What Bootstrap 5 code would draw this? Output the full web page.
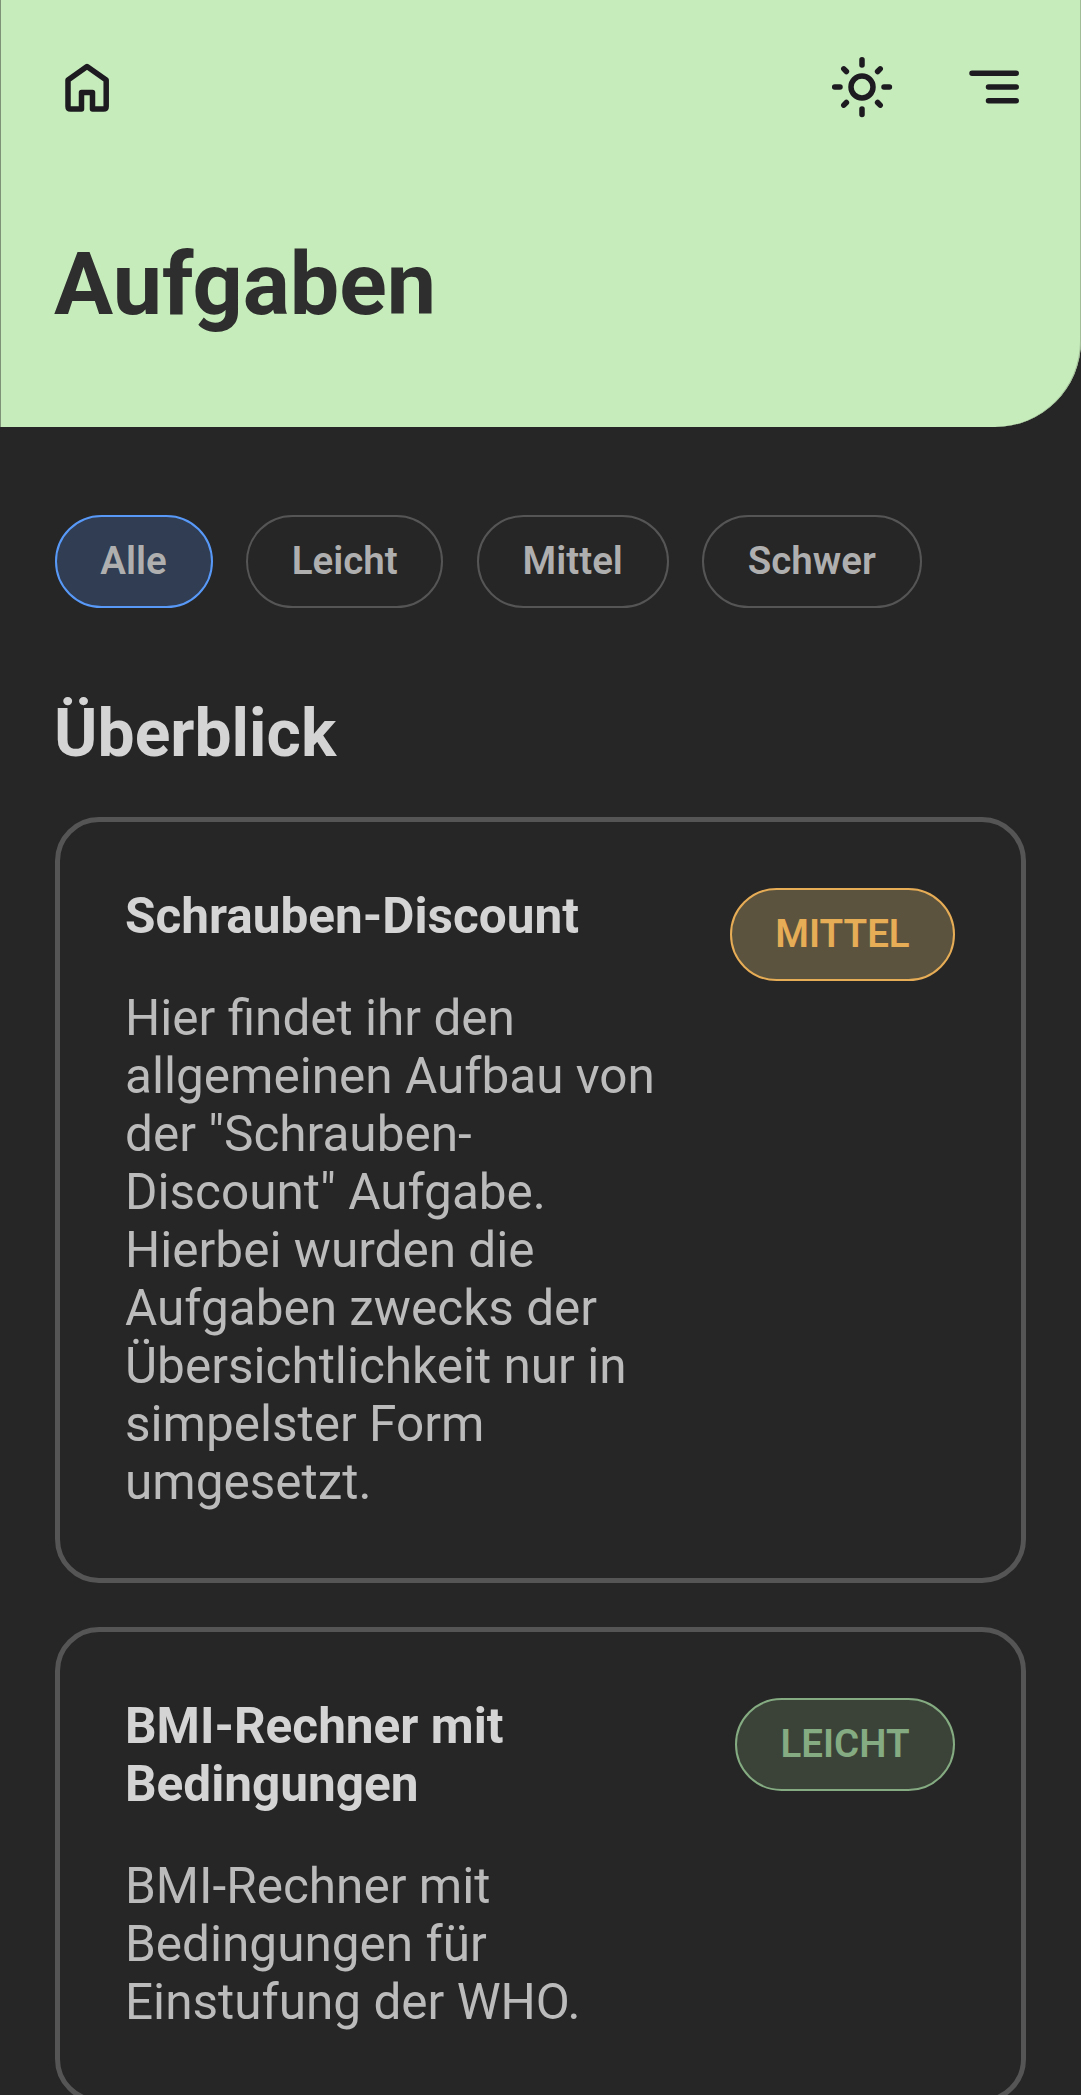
<!DOCTYPE html>
<html lang="de">
<head>
<meta charset="utf-8">
<meta name="viewport" content="width=device-width, initial-scale=1">
<title>Aufgaben</title>
<link href="https://cdn.jsdelivr.net/npm/bootstrap@5.3.0/dist/css/bootstrap.min.css" rel="stylesheet">
<style>
  body { background: #262626; color: #bbb; font-family: Roboto, "Liberation Sans", sans-serif; font-size: 49.5px; line-height: 58px; height: 2095px; overflow: hidden; }
  .hero { height: 427px; padding: 54px 54px 0 53px; background: #c6ecbb; border-left: 1px solid #7e9278; border-bottom-right-radius: 86px; box-shadow: inset -1px 0 #a1bd98; }
  .hero svg { display: block; width: 66px; height: 66px; fill: none; stroke: #1d1b20; stroke-width: 5.5; stroke-linecap: round; stroke-linejoin: round; }
  .hero .tools { gap: 66px; }
  .hero nav { margin-left: -.5px; }
  .hero h1 { margin-top: 112px; font-size: 88px; line-height: 103px; color: #2e2e2e; }
  main { padding: 88px 54.6px 0 54px; }
  .pill { padding: 21px 43.75px 23px; border: 2px solid #555; border-radius: 46.5px; font-size: 38.5px; line-height: 45px; font-weight: 600; color: #afafaf; background: none; white-space: nowrap; }
  .pill.active { border-color: #5899f8; background: #303d52; }
  .pill.medium { border-color: #e6ac56; background: #5b533d; color: #e6ac56; }
  .pill.easy { border-color: #84ab81; background: #3b4339; color: #84ab81; }
  .filters { gap: 33.4px; margin-left: .6px; }
  h2.section { margin: 87px 0 45px; font-size: 66px; line-height: 77px; color: #d4d4d4; }
  .task { border: 5px solid #555; border-radius: 44px; background: none; padding: 66px 66px 66px 65.4px; color: #bbb; gap: 66px; margin: 0 0 44px .6px; }
  .task h3 { margin: -1px 0 44px; font-size: 49.5px; line-height: 58px; color: #d4d4d4; }
  .task p { padding-bottom: 1px; }
</style>
</head>
<body>
<header class="hero">
  <nav class="d-flex justify-content-between">
    <a href="#" aria-label="Startseite"><svg viewBox="54 54 66 66"><path d="M87 66.600 68 80V106.500Q68 109 70.500 109H81.500V92.500H92.500V109H103.500Q106.200 109 106.200 106.500V80Z"/></svg></a>
    <div class="d-flex tools">
      <a href="#" aria-label="Helles Design"><svg viewBox="829 54 66 66"><circle cx="862" cy="87" r="11"/><path d="M862 59.700V65M862 109V114.400M834.700 87H840M884 87H889.400M843.800 68.800 846.400 71.500M880.200 68.800 877.600 71.500M843.800 105.200 846.400 102.500M880.200 105.200 877.600 102.500"/></svg></a>
      <a href="#" aria-label="Menü"><svg viewBox="961 54 66 66"><path d="M972 73.200H1016.200M988.500 87H1016.200M988.500 100.700H1016.200"/></svg></a>
    </div>
  </nav>
  <h1 class="fw-bold mb-0">Aufgaben</h1>
</header>
<main>
  <div class="d-flex filters">
    <button class="pill active">Alle</button>
    <button class="pill">Leicht</button>
    <button class="pill">Mittel</button>
    <button class="pill">Schwer</button>
  </div>
  <h2 class="section fw-bold">Überblick</h2>
  <article class="task d-flex justify-content-between align-items-start">
    <div>
      <h3 class="fw-bold">Schrauben-Discount</h3>
      <p class="mb-0">Hier findet ihr den allgemeinen Aufbau von der "Schrauben-Discount" Aufgabe. Hierbei wurden die Aufgaben zwecks der Übersichtlichkeit nur in simpelster Form umgesetzt.</p>
    </div>
    <span class="pill medium">MITTEL</span>
  </article>
  <article class="task d-flex justify-content-between align-items-start">
    <div>
      <h3 class="fw-bold">BMI-Rechner mit Bedingungen</h3>
      <p class="mb-0">BMI-Rechner mit Bedingungen für Einstufung der WHO.</p>
    </div>
    <span class="pill easy">LEICHT</span>
  </article>
</main>
<script src="https://cdn.jsdelivr.net/npm/bootstrap@5.3.0/dist/js/bootstrap.bundle.min.js"></script>
</body>
</html>
